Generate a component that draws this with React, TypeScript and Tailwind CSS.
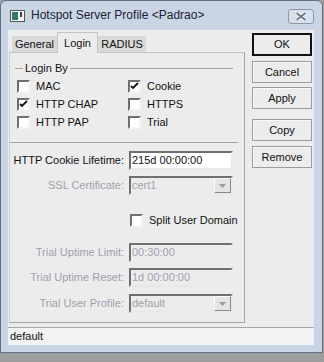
const font = { fontFamily: '"Liberation Sans", Arial, sans-serif' };

function Check({ checked = false, disabled = false }: { checked?: boolean; disabled?: boolean }) {
  return (
    <span
      className={`relative inline-block h-[13px] w-[13px] shrink-0 border-2 border-t-[#6f6f6f] border-l-[#6f6f6f] border-r-[#f4f4f4] border-b-[#f4f4f4] ${disabled ? "bg-[#ececec]" : "bg-white"}`}
    >
      {checked && (
        <svg width="9" height="9" viewBox="0 0 9 9" className="absolute left-0 top-0">
          <path d="M1 4 L3 6 L8 1" stroke="#111" strokeWidth="1.8" fill="none" />
        </svg>
      )}
    </span>
  );
}

function CheckRow({ label, checked }: { label: string; checked?: boolean }) {
  return (
    <div className="flex h-[18px] items-center gap-[6px]">
      <Check checked={checked} />
      <span>{label}</span>
    </div>
  );
}

function Field({
  label,
  value,
  disabled,
  select,
  mt,
}: {
  label: string;
  value: string;
  disabled?: boolean;
  select?: boolean;
  mt: string;
}) {
  return (
    <div className={`flex h-[19px] items-center ${mt}`}>
      <span className={`w-[114px] text-right ${disabled ? "text-[#a29fae]" : "text-[#111]"}`}>{label}</span>
      <div
        className={`ml-[5px] flex h-[19px] w-[104px] items-center border-2 border-t-[#6f6f6f] border-l-[#6f6f6f] border-r-[#e9e9e9] border-b-[#e9e9e9] ${disabled ? "bg-[#ececec] text-[#a29fae]" : "bg-white text-[#111]"}`}
      >
        <span className="flex-1 pl-[1px]">{value}</span>
        {select && (
          <span className="flex h-full w-[17px] items-center justify-center border border-t-[#fafafa] border-l-[#fafafa] border-r-[#8a8a8a] border-b-[#8a8a8a] bg-[#e4e4e4]">
            <svg width="7" height="4" viewBox="0 0 7 4">
              <path d="M0 0 H7 L3.5 4 Z" fill="#9a9a9a" />
            </svg>
          </span>
        )}
      </div>
    </div>
  );
}

function Btn({ label, main, cls }: { label: string; main?: boolean; cls: string }) {
  return (
    <div
      className={`flex w-[60px] items-center justify-center bg-[#ececec] text-[#111] ${cls} ${main ? "border-2 border-[#111]" : "border border-[#9c9c9c] shadow-[inset_1px_1px_0_#fafafa]"}`}
    >
      {label}
    </div>
  );
}

export default function App() {
  return (
    <div className="h-[362px] w-[324px] overflow-hidden bg-[#9e9e9e] text-[11px] leading-[13px]" style={font}>
      <div className="flex h-[353px] w-[323px] flex-col rounded-t-[6px] border border-[#5f6f86] bg-[#c9d5e5]">
        {/* title bar */}
        <div className="flex h-[29px] shrink-0 items-center pl-[9px]">
          <svg width="15" height="12" viewBox="0 0 15 12">
            <rect x="0.5" y="0.5" width="14" height="11" fill="#f4f4f4" stroke="#50565e" />
            <rect x="2" y="2" width="6" height="8" fill="#2f7a66" />
            <rect x="10" y="2" width="2" height="5" fill="#3a3f46" />
          </svg>
          <span className="ml-[6px] text-[12px] text-[#1c2230]">Hotspot Server Profile &lt;Padrao&gt;</span>
          <div className="ml-auto mr-[8px] mt-[2px] flex h-[15px] w-[26px] items-center justify-center rounded-[3px] border border-[#8c98aa] bg-[#d7e0ec]">
            <svg width="12" height="9" viewBox="0 0 12 9">
              <path d="M1.5 1 L10.5 8 M10.5 1 L1.5 8" stroke="#fafafa" strokeWidth="3.4" />
              <path d="M1.5 1 L10.5 8 M10.5 1 L1.5 8" stroke="#6c7482" strokeWidth="1.6" />
            </svg>
          </div>
        </div>

        {/* client */}
        <div className="ml-[7px] flex h-[315px] w-[306px] flex-col bg-[#ececec]">
          <div className="flex">
            {/* tabs */}
            <div className="ml-[1px] w-[236px]">
              <div className="flex h-[22px] items-end pl-[3px]">
                <div className="flex h-[16px] w-[45px] items-center justify-center bg-[#d9d9d9] text-[#111]">General</div>
                <div className="relative z-10 -mb-px flex h-[21px] w-[41px] items-center justify-center border-x border-t border-[#c4c4c4] bg-[#ececec] text-[#111]">
                  Login
                </div>
                <div className="flex h-[16px] w-[48px] items-center justify-center bg-[#d9d9d9] text-[#111]">RADIUS</div>
              </div>
              <div className="flex h-[271px] flex-col border border-[#a5a5a5] border-l-[#cfcfcf] border-t-[#c4c4c4]">
                {/* Login By group */}
                <div className="ml-[5px] mt-[9px] flex h-[13px] w-[218px] items-center">
                  <span className="h-px w-[8px] bg-[#a5a5a5]" />
                  <span className="px-[2px] text-[#111]">Login By</span>
                  <span className="h-px flex-1 bg-[#a5a5a5]" />
                </div>
                <div className="ml-[7px] mt-[2px] grid w-[200px] grid-cols-[111px_1fr] text-[#111]">
                  <CheckRow label="MAC" />
                  <CheckRow label="Cookie" checked />
                  <CheckRow label="HTTP CHAP" checked />
                  <CheckRow label="HTTPS" />
                  <CheckRow label="HTTP PAP" />
                  <CheckRow label="Trial" />
                </div>
                <div className="mt-[11px] h-px w-[228px] bg-[#a5a5a5]" />

                <Field mt="mt-[8px]" label="HTTP Cookie Lifetime:" value="215d 00:00:00" />
                <Field mt="mt-[6px]" label="SSL Certificate:" value="cert1" disabled select />

                <div className="ml-[120px] mt-[19px] flex h-[13px] items-center gap-[6px] text-[#111]">
                  <Check />
                  <span>Split User Domain</span>
                </div>

                <Field mt="mt-[16px]" label="Trial Uptime Limit:" value="00:30:00" disabled />
                <Field mt="mt-[6px]" label="Trial Uptime Reset:" value="1d 00:00:00" disabled />
                <Field mt="mt-[7px]" label="Trial User Profile:" value="default" disabled select />
              </div>
            </div>

            {/* buttons */}
            <div className="ml-[7px] mt-[3px] flex flex-col">
              <Btn label="OK" main cls="h-[23px]" />
              <Btn label="Cancel" cls="mt-[5px] h-[22px]" />
              <Btn label="Apply" cls="mt-[4px] h-[22px]" />
              <Btn label="Copy" cls="mt-[10px] h-[22px]" />
              <Btn label="Remove" cls="mt-[5px] h-[22px]" />
            </div>
          </div>

          {/* status bar */}
          <div className="mt-[4px] h-px w-full bg-[#a5a5a5]" />
          <div className="flex h-[17px] items-center bg-[#f2f2f2] pl-[2px] text-[#111]">default</div>
        </div>
      </div>
    </div>
  );
}
